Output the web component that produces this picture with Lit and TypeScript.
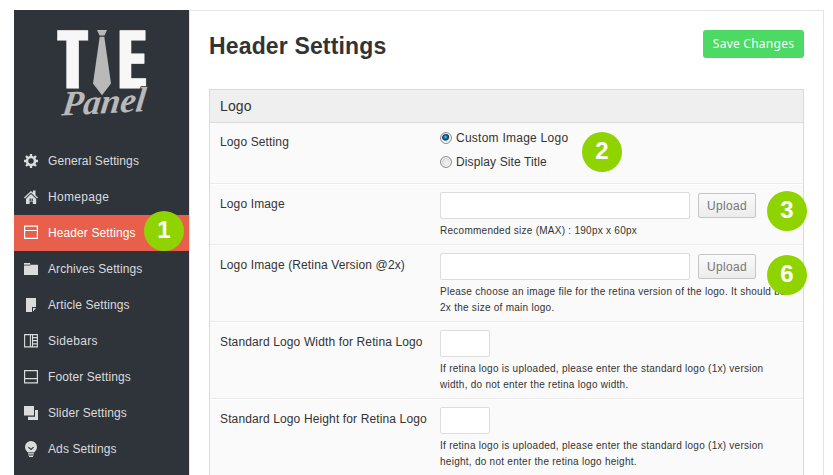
import { LitElement, html, css, svg } from "lit";
import type { TemplateResult, SVGTemplateResult } from "lit";

const icons: Record<string, SVGTemplateResult> = {
  gear: svg`<circle cx="7" cy="7" r="4" fill="none" stroke="currentColor" stroke-width="2.6"/>
    <path d="M7 0V3M7 11V14M0 7H3M11 7H14M2 2L4 4M10 10L12 12M12 2L10 4M4 10L2 12" stroke="currentColor" stroke-width="2.3" fill="none"/>`,
  home: svg`<path d="M0 7.6L7 1l1.9 1.8V.6h2.6v4.7L14 7.6l-.9.9L7 2.8.9 8.5z" fill="currentColor"/>
    <path fill-rule="evenodd" d="M7 4l5.2 4.9V14H2V8.7zM5.6 8.6V11h1.2V8.6zM7.6 8.6V11h1.2V8.6zM5.6 11.4V14h3.2v-2.6z" fill="currentColor"/>`,
  header: svg`<path d="M.6 1.1h12.8v12.3H.6zM.6 5.5h12.8" stroke="currentColor" stroke-width="1.2" fill="none"/>`,
  folder: svg`<path d="M0 1h6.2v1.8H14V13H0z" fill="currentColor"/><path d="M0 3.1h6.4" stroke="#2f343b" stroke-width=".8"/>`,
  note: svg`<path d="M2 0h10v9H8v5H2z" fill="currentColor"/><path d="M9 10h3l-3 3.6z" fill="currentColor"/>`,
  sidebar: svg`<path d="M.6.6h12.8v12.3H.6zM6.4.6v12.3M8.5.6v12.3" stroke="currentColor" stroke-width="1.1" fill="none"/>
    <path d="M8 3.6h5.5M8 6.7h5.5M8 9.8h5.5" stroke="currentColor" stroke-width="1.3"/>`,
  footer: svg`<path d="M.6.6h12.8v12.3H.6zM.6 8.6h12.8" stroke="currentColor" stroke-width="1.2" fill="none"/>`,
  slider: svg`<path d="M0 0h10v9.6H0zM11 4h3v10H4v-3.3h7z" fill="currentColor"/>`,
  bulb: svg`<path d="M7-1a6 6 0 0 1 6 6c0 2.400-1.300 3.600-2.500 5.200H3.500C2.300 8.600 1 7.400 1 5a6 6 0 0 1 6-6z" fill="currentColor"/>
    <path d="M4.400 5.100L7 7.400l2.600-2.300" stroke="#2f343b" stroke-width="1.200" fill="none"/>
    <path d="M4 11.300h6M4.200 13h5.600M5 14.500h4" stroke="currentColor" stroke-width="1.100"/>`,
};

class AdminNav extends LitElement {
  static styles = css`
    :host { display: flex; flex-direction: column; width: 175px; background: #2f343b; color: #dadbdc; }
    .brand { display: block; width: 175px; height: 133px; }
    .word { font-family: "Liberation Sans", Arial, sans-serif; font-weight: bold; font-size: 83px; fill: #f7f7f7; stroke: #f7f7f7; stroke-width: .8px; }
    .script { font-family: "Liberation Serif", serif; font-style: italic; font-weight: bold; font-size: 35px; fill: #b9b9b9; stroke: #2f343b; stroke-width: 1.6px; paint-order: stroke; }
    .item { display: flex; align-items: center; gap: 10px; height: 36px; padding-left: 10px; box-sizing: border-box; font-size: 12px; letter-spacing: .1px; position: relative; }
    .item span { line-height: 16px; }
    .item.wide { letter-spacing: .3px; }
    .active { background: #e8604c; color: #fff; }
    .glyph { width: 14px; height: 14px; overflow: visible; flex: none; }
    .active .glyph { margin-top: -2px; }
    .mark { position: absolute; left: 130px; top: -4px; z-index: 1; }
  `;
  items: [string, string, boolean?][] = [
    ["gear", "General Settings"], ["home", "Homepage", true], ["header", "Header Settings"],
    ["folder", "Archives Settings"], ["note", "Article Settings"], ["sidebar", "Sidebars", true],
    ["footer", "Footer Settings"], ["slider", "Slider Settings"], ["bulb", "Ads Settings"],
  ];
  render() {
    return html`
      <svg class="brand" viewBox="14 10 175 133">
        <defs><filter id="widen" x="-20%" y="-10%" width="140%" height="120%"><feMorphology operator="dilate" radius="3 0"/></filter></defs>
        <g filter="url(#widen)"><text class="word" transform="translate(60 87.500) scale(.5 1)">T</text></g>
        <g filter="url(#widen)"><text class="word" transform="translate(120.600 87.500) scale(.43 1)">E</text></g>
        <path d="M97 30h10l-2.500 5.500h-5zM99.700 36.800h4.600L111 83.500 102 95.300 93 83.500z" fill="#b9b9b9"/>
        <text class="script" transform="translate(61 115.500) rotate(-3) skewX(-10)">Panel</text>
      </svg>
      ${this.items.map(([icon, label, wide]) => html`
        <div class="item ${icon === "header" ? "active" : ""} ${wide ? "wide" : ""}">
          <svg class="glyph" viewBox="0 0 14 14">${icons[icon]}</svg><span>${label}</span>
          ${icon === "header" ? html`<step-badge class="mark" n="1"></step-badge>` : ""}
        </div>`)}
    `;
  }
}
customElements.define("admin-nav", AdminNav);

class StepBadge extends LitElement {
  static properties = { n: {} };
  declare n: string;
  static styles = css`
    :host { display: flex; justify-content: center; width: 40px; height: 40px; border-radius: 50%; background: #8fd400; color: #fff; font: bold 24px/38px "Liberation Sans", Arial, sans-serif; letter-spacing: 0; }
  `;
  render() { return html`${this.n}`; }
}
customElements.define("step-badge", StepBadge);

class AppRoot extends LitElement {
  static styles = css`
    :host { display: block; height: 475px; overflow: hidden; background: #fff; font-family: "Liberation Sans", Arial, sans-serif; color: #333; }
    .frame { display: flex; height: 465px; padding: 10px 9px 0 14px; }
    admin-nav { flex: none; height: 465px; }
    .main { flex: 1; border: solid #e4e4e4; border-width: 1px 1px 0 1px; padding: 19px 19px 0 19px; }
    .top { display: flex; justify-content: space-between; height: 59px; }
    h1 { margin: 0; font-size: 23px; line-height: 28px; padding-top: 2px; letter-spacing: .15px; }
    .save { height: 28px; width: 101px; box-sizing: border-box; border: 0; border-radius: 3px; background: #4cd964; color: #fff; padding: 0; font: 12px/28px "Noto Sans", sans-serif; letter-spacing: .25px; }
    .box { border: 1px solid #dadada; background: #fafafa; height: 400px; }
    h2 { margin: 0; padding: 0 10px; font-size: 14px; font-weight: normal; letter-spacing: .15px; line-height: 32px; height: 32px; background: #efefef; border-bottom: 1px solid #dadada; }
    .row { display: flex; position: relative; box-sizing: border-box; padding: 8px 10px 5px; border-bottom: 1px solid #ebebeb; box-shadow: inset 0 1px #fff; }
    .row.first { height: 61px; padding-top: 7px; box-shadow: none; }
    .label { width: 220px; flex: none; font-size: 12px; line-height: 16px; padding-top: 4px; letter-spacing: .13px; }
    .line { display: flex; align-items: center; gap: 8px; }
    .field { width: 250px; height: 27px; box-sizing: border-box; border: 1px solid #ddd; border-radius: 2px; background: #fff; }
    .field.small { width: 50px; }
    .upload { width: 58px; height: 25px; box-sizing: border-box; padding: 0; border: 1px solid #c6c6c6; border-radius: 2px; background: linear-gradient(#fafafa, #ececec); color: #777; font: 12px/22px "Liberation Sans", Arial, sans-serif; letter-spacing: .3px; }
    .note { margin-top: 4px; width: 350px; font-size: 10px; line-height: 16px; letter-spacing: .265px; white-space: pre-line; }
    .option { display: flex; align-items: center; gap: 4px; height: 16px; font-size: 12px; letter-spacing: .25px; margin-bottom: 8px; }
    .option.tight { letter-spacing: .12px; }
    .radio { width: 12px; height: 12px; box-sizing: border-box; border: 1px solid #8e8f8f; border-radius: 50%; background: radial-gradient(circle at 60% 60%, #eee 20%, #cfcfcf 75%); box-shadow: inset 0 0 0 1px #f4f4f4; }
    .radio.on { background: radial-gradient(circle at 45% 40%, #6fd0f5 0, #1679ad 18%, #0b3b5e 38%, #e4e8ea 50%); }
    .mark { position: absolute; z-index: 1; left: 557px; top: 7px; }
    .mark.n2 { left: 372px; top: 9px; }
    .mark.n6 { top: 10px; }
  `;
  row(label: string, body: TemplateResult, note: string, n = "") {
    return html`<div class="row">
      <div class="label">${label}</div>
      <div><div class="line">${body}</div><div class="note">${note}</div></div>
      ${n ? html`<step-badge class="mark n${n}" n=${n}></step-badge>` : ""}
    </div>`;
  }
  render() {
    const upload = html`<div class="field"></div><button class="upload">Upload</button>`;
    const small = html`<div class="field small"></div>`;
    return html`<div class="frame">
      <admin-nav></admin-nav>
      <div class="main">
        <div class="top"><h1>Header Settings</h1><button class="save">Save Changes</button></div>
        <div class="box">
          <h2>Logo</h2>
          <div class="row first">
            <div class="label">Logo Setting</div>
            <div>
              <div class="option"><span class="radio on"></span>Custom Image Logo</div>
              <div class="option tight"><span class="radio"></span>Display Site Title</div>
            </div>
            <step-badge class="mark n2" n="2"></step-badge>
          </div>
          ${this.row("Logo Image", upload, "Recommended size (MAX) : 190px x 60px", "3")}
          ${this.row("Logo Image (Retina Version @2x)", upload, "Please choose an image file for the retina version of the logo. It should be\n2x the size of main logo.", "6")}
          ${this.row("Standard Logo Width for Retina Logo", small, "If retina logo is uploaded, please enter the standard logo (1x) version\nwidth, do not enter the retina logo width.")}
          ${this.row("Standard Logo Height for Retina Logo", small, "If retina logo is uploaded, please enter the standard logo (1x) version\nheight, do not enter the retina logo height.")}
        </div>
      </div>
    </div>`;
  }
}
customElements.define("app-root", AppRoot);
